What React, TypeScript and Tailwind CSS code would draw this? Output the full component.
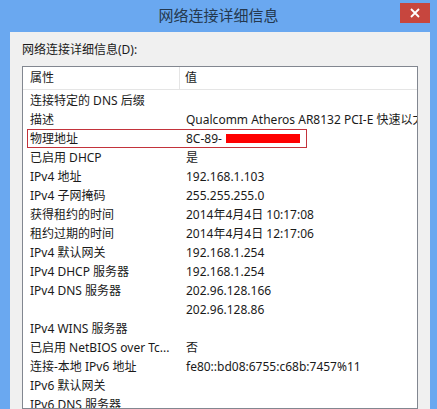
import React from "react";

type Row = { name: string; value: string; mark?: boolean };

const ROWS: Row[] = [
  { name: "连接特定的 DNS 后缀", value: "" },
  { name: "描述", value: "Qualcomm Atheros AR8132 PCI-E 快速以太网控制器 (NDIS 6.30)" },
  { name: "物理地址", value: "8C-89-", mark: true },
  { name: "已启用 DHCP", value: "是" },
  { name: "IPv4 地址", value: "192.168.1.103" },
  { name: "IPv4 子网掩码", value: "255.255.255.0" },
  { name: "获得租约的时间", value: "2014年4月4日 10:17:08" },
  { name: "租约过期的时间", value: "2014年4月4日 12:17:06" },
  { name: "IPv4 默认网关", value: "192.168.1.254" },
  { name: "IPv4 DHCP 服务器", value: "192.168.1.254" },
  { name: "IPv4 DNS 服务器", value: "202.96.128.166" },
  { name: "", value: "202.96.128.86" },
  { name: "IPv4 WINS 服务器", value: "" },
  { name: "已启用 NetBIOS over Tc...", value: "否" },
  { name: "连接-本地 IPv6 地址", value: "fe80::bd08:6755:c68b:7457%11" },
  { name: "IPv6 默认网关", value: "" },
  { name: "IPv6 DNS 服务器", value: "" },
];

const FONT = "font-['Noto_Sans','Noto_Sans_CJK_SC',sans-serif]";

function DetailRow({ row }: { row: Row }) {
  return (
    <div className="relative grid grid-cols-[157px_1fr] h-[19px] items-center whitespace-nowrap">
      <div className="pl-[7px] overflow-hidden">{row.name}</div>
      <div className="pl-[6px] overflow-hidden">{row.value}</div>
      {row.mark && (
        <>
          <div className="absolute left-[4px] top-0 w-[280px] h-[19px] border border-[#c3333b]" />
          <div className="absolute left-[203px] top-[5px] w-[74px] h-[9px] bg-[#ff0000]" />
        </>
      )}
    </div>
  );
}

export default function App() {
  return (
    <div className={`relative w-[437px] h-[409px] overflow-hidden bg-[#6aa8f0] flex flex-col ${FONT}`}>
      <div className="h-[32px] shrink-0 flex items-center justify-center text-[15px] text-[#24384e] pb-[1px]">
        网络连接详细信息
      </div>
      <button
        type="button"
        className="absolute top-[3px] right-[7px] w-[30px] h-[20px] bg-[#c7463e] flex items-center justify-center"
      >
        <svg width="10" height="10" viewBox="0 0 10 10">
          <path d="M1 1 L9 9 M9 1 L1 9" stroke="#fff" strokeWidth="1.8" />
        </svg>
      </button>

      <div className="ml-[10px] mr-[7px] flex-1 min-h-0 bg-[#f0f0f0] px-[12px] pt-[10px] flex flex-col text-[12px] text-[#1a1a1a]">
        <div className="h-[16px] leading-[16px]">网络连接详细信息(D):</div>
        <div className="mt-[8px] flex-1 min-h-0 border border-[#828790] bg-white overflow-hidden">
          <div className="grid grid-cols-[157px_1fr] h-[23px] border-b border-[#e5e5e5] items-center">
            <div className="pl-[7px] h-full flex items-center border-r border-[#e5e5e5]">属性</div>
            <div className="pl-[5px]">值</div>
          </div>
          <div className="pt-[1px]">
            {ROWS.map((r, i) => (
              <DetailRow key={i} row={r} />
            ))}
          </div>
        </div>
      </div>
    </div>
  );
}
